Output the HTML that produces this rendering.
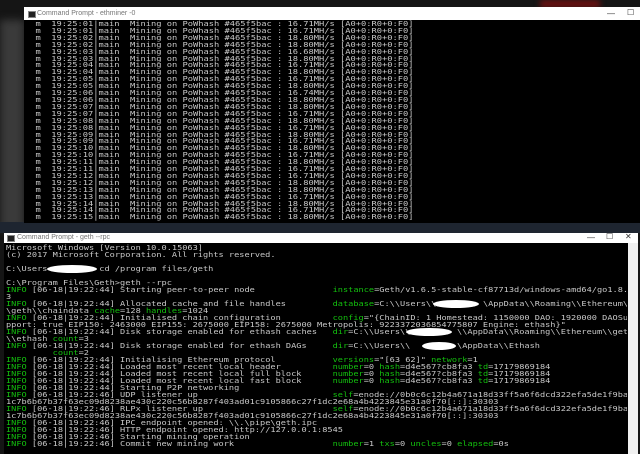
<!DOCTYPE html>
<html><head><meta charset="utf-8"><style>
*{margin:0;padding:0}
body{width:640px;height:454px;overflow:hidden;background:#151515;position:relative;font-family:"Liberation Mono",monospace}
.bg1{position:absolute;left:540px;top:0;width:60px;height:8px;background:#6a1010;filter:blur(3px)}
.bg2{position:absolute;left:0;top:20px;width:24px;height:210px;background:#3a3a3a;filter:blur(4px)}
.bg3{position:absolute;left:0;top:222px;width:640px;height:11px;background:#1e2530}
.win{position:absolute;background:#000;overflow:hidden}
.tb{position:absolute;left:0;right:0;top:0;background:#fff;color:#777;font:7px "Liberation Sans",sans-serif}
.tb .ic{position:absolute;width:6px;height:5px;background:#222;border:1px solid #888}
.tb .t{position:absolute}
.btn{position:absolute;color:#333;font:8px "Liberation Sans",sans-serif}
pre{position:absolute;white-space:pre;color:#c8c8c8;font-size:7.4px;transform-origin:0 0}
#w1 pre{line-height:6.9px;transform:scaleX(1.18)}
#w2 pre{line-height:7px;transform:scaleX(1.165)}
.g{color:#13c00e}
.blob{position:absolute;background:#fff;border-radius:50%}
.sb{position:absolute;right:0;top:10px;width:10px;bottom:0;background:#f0f0f0}
</style></head><body>
<div class="bg1"></div><div class="bg2"></div><div class="bg3"></div>
<div class="win" id="w1" style="left:24px;top:7px;width:616px;height:216px">
<div class="tb" style="height:13px"><div class="ic" style="left:4px;top:4px"></div><div class="t" style="left:13px;top:3px">Command Prompt - ethminer -0</div>
<div class="btn" style="left:583px;top:2px">—</div><div class="btn" style="left:603px;top:1px">☐</div></div>
<pre style="left:1px;top:14px">  m  19:25:01|main  Mining on PoWhash #465f5bac : 16.71MH/s [A0+0:R0+0:F0]
  m  19:25:01|main  Mining on PoWhash #465f5bac : 16.71MH/s [A0+0:R0+0:F0]
  m  19:25:02|main  Mining on PoWhash #465f5bac : 18.80MH/s [A0+0:R0+0:F0]
  m  19:25:02|main  Mining on PoWhash #465f5bac : 18.80MH/s [A0+0:R0+0:F0]
  m  19:25:03|main  Mining on PoWhash #465f5bac : 16.68MH/s [A0+0:R0+0:F0]
  m  19:25:03|main  Mining on PoWhash #465f5bac : 18.80MH/s [A0+0:R0+0:F0]
  m  19:25:04|main  Mining on PoWhash #465f5bac : 16.71MH/s [A0+0:R0+0:F0]
  m  19:25:04|main  Mining on PoWhash #465f5bac : 18.80MH/s [A0+0:R0+0:F0]
  m  19:25:05|main  Mining on PoWhash #465f5bac : 16.71MH/s [A0+0:R0+0:F0]
  m  19:25:05|main  Mining on PoWhash #465f5bac : 18.80MH/s [A0+0:R0+0:F0]
  m  19:25:06|main  Mining on PoWhash #465f5bac : 16.74MH/s [A0+0:R0+0:F0]
  m  19:25:06|main  Mining on PoWhash #465f5bac : 18.80MH/s [A0+0:R0+0:F0]
  m  19:25:07|main  Mining on PoWhash #465f5bac : 18.80MH/s [A0+0:R0+0:F0]
  m  19:25:07|main  Mining on PoWhash #465f5bac : 16.71MH/s [A0+0:R0+0:F0]
  m  19:25:08|main  Mining on PoWhash #465f5bac : 18.80MH/s [A0+0:R0+0:F0]
  m  19:25:08|main  Mining on PoWhash #465f5bac : 16.71MH/s [A0+0:R0+0:F0]
  m  19:25:09|main  Mining on PoWhash #465f5bac : 18.80MH/s [A0+0:R0+0:F0]
  m  19:25:09|main  Mining on PoWhash #465f5bac : 16.71MH/s [A0+0:R0+0:F0]
  m  19:25:10|main  Mining on PoWhash #465f5bac : 18.80MH/s [A0+0:R0+0:F0]
  m  19:25:10|main  Mining on PoWhash #465f5bac : 16.71MH/s [A0+0:R0+0:F0]
  m  19:25:11|main  Mining on PoWhash #465f5bac : 18.80MH/s [A0+0:R0+0:F0]
  m  19:25:11|main  Mining on PoWhash #465f5bac : 16.71MH/s [A0+0:R0+0:F0]
  m  19:25:12|main  Mining on PoWhash #465f5bac : 16.71MH/s [A0+0:R0+0:F0]
  m  19:25:12|main  Mining on PoWhash #465f5bac : 18.80MH/s [A0+0:R0+0:F0]
  m  19:25:13|main  Mining on PoWhash #465f5bac : 18.80MH/s [A0+0:R0+0:F0]
  m  19:25:13|main  Mining on PoWhash #465f5bac : 16.71MH/s [A0+0:R0+0:F0]
  m  19:25:14|main  Mining on PoWhash #465f5bac : 18.80MH/s [A0+0:R0+0:F0]
  m  19:25:14|main  Mining on PoWhash #465f5bac : 16.71MH/s [A0+0:R0+0:F0]
  m  19:25:15|main  Mining on PoWhash #465f5bac : 18.80MH/s [A0+0:R0+0:F0]</pre>
</div>
<div class="win" id="w2" style="left:4px;top:233px;width:634px;height:221px">
<div class="tb" style="height:10px"><div class="ic" style="left:3px;top:2px"></div><div class="t" style="left:13px;top:1px">Command Prompt - geth --rpc</div>
<div class="btn" style="left:583px;top:0">—</div><div class="btn" style="left:602px;top:-1px">☐</div><div class="btn" style="left:621px;top:-1px">✕</div></div>
<div style="position:absolute;left:0;top:10px;width:623px;bottom:0;overflow:hidden">
<pre style="left:2px;top:1px">Microsoft Windows [Version 10.0.15063]
(c) 2017 Microsoft Corporation. All rights reserved.

C:\Users          cd /program files/geth

C:\Program Files\Geth&gt;geth --rpc
<span class="g">INFO</span> [06-18|19:22:44] Starting peer-to-peer node               <span class="g">instance</span>=Geth/v1.6.5-stable-cf87713d/windows-amd64/go1.8.3
3
<span class="g">INFO</span> [06-18|19:22:44] Allocated cache and file handles         <span class="g">database</span>=C:\\Users\\         \AppData\\Roaming\\Ethereum\\
\geth\\chaindata <span class="g">cache</span>=128 <span class="g">handles</span>=1024
<span class="g">INFO</span> [06-18|19:22:44] Initialised chain configuration          <span class="g">config</span>="{ChainID: 1 Homestead: 1150000 DAO: 1920000 DAOSu
pport: true EIP150: 2463000 EIP155: 2675000 EIP158: 2675000 Metropolis: 9223372036854775807 Engine: ethash}"
<span class="g">INFO</span> [06-18|19:22:44] Disk storage enabled for ethash caches   <span class="g">dir</span>=C:\\Users\\         \\AppData\\Roaming\\Ethereum\\geth
\\ethash <span class="g">count</span>=3
<span class="g">INFO</span> [06-18|19:22:44] Disk storage enabled for ethash DAGs     <span class="g">dir</span>=C:\\Users\\         \AppData\\Ethash
         <span class="g">count</span>=2
<span class="g">INFO</span> [06-18|19:22:44] Initialising Ethereum protocol           <span class="g">versions</span>="[63 62]" <span class="g">network</span>=1
<span class="g">INFO</span> [06-18|19:22:44] Loaded most recent local header          <span class="g">number</span>=0 <span class="g">hash</span>=d4e567?cb8fa3 <span class="g">td</span>=17179869184
<span class="g">INFO</span> [06-18|19:22:44] Loaded most recent local full block      <span class="g">number</span>=0 <span class="g">hash</span>=d4e567?cb8fa3 <span class="g">td</span>=17179869184
<span class="g">INFO</span> [06-18|19:22:44] Loaded most recent local fast block      <span class="g">number</span>=0 <span class="g">hash</span>=d4e567?cb8fa3 <span class="g">td</span>=17179869184
<span class="g">INFO</span> [06-18|19:22:44] Starting P2P networking
<span class="g">INFO</span> [06-18|19:22:46] UDP listener up                          <span class="g">self</span>=enode://0b0c6c12b4a671a18d33ff5a6f6dcd322efa5de1f9ba
1c7b6b67b37f63ec09d8238ae430c220c56b8287f403ad01c9105866c27f1dc2e68a4b4223845e31a0f70[::]:30303
<span class="g">INFO</span> [06-18|19:22:46] RLPx listener up                         <span class="g">self</span>=enode://0b0c6c12b4a671a18d33ff5a6f6dcd322efa5de1f9ba
1c7b6b67b37f63ec09d8238ae430c220c56b8287f403ad01c9105866c27f1dc2e68a4b4223845e31a0f70[::]:30303
<span class="g">INFO</span> [06-18|19:22:46] IPC endpoint opened: \\.\pipe\geth.ipc
<span class="g">INFO</span> [06-18|19:22:46] HTTP endpoint opened: http://127.0.0.1:8545
<span class="g">INFO</span> [06-18|19:22:46] Starting mining operation
<span class="g">INFO</span> [06-18|19:22:46] Commit new mining work                   <span class="g">number</span>=1 <span class="g">txs</span>=0 <span class="g">uncles</span>=0 <span class="g">elapsed</span>=0s
_</pre>
<div class="blob" style="left:43px;top:22px;width:50px;height:8px"></div>
<div class="blob" style="left:429px;top:57px;width:46px;height:8px"></div>
<div class="blob" style="left:402px;top:85px;width:46px;height:8px"></div>
<div class="blob" style="left:418px;top:99px;width:34px;height:8px"></div>
</div>
<div class="sb"></div>
</div>
</body></html>
